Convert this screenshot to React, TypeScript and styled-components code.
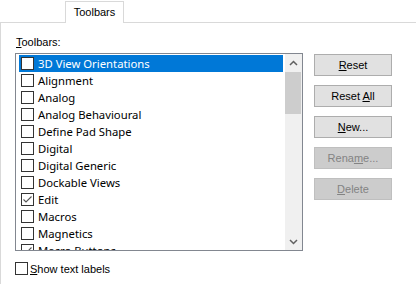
import React from "react";
import styled, { createGlobalStyle } from "styled-components";

const Global = createGlobalStyle`
  html, body { margin: 0; padding: 0; background: #ffffff; }
  body { width: 416px; height: 284px; overflow: hidden; font-family: "Liberation Sans", Arial, sans-serif; }
`;

const Page = styled.div`
  width: 416px;
  height: 284px;
  display: flex;
  flex-direction: column;
  background: #ffffff;
`;

const TabStrip = styled.div`
  height: 22px;
  display: flex;
  align-items: flex-end;
  padding-left: 65px;
  box-sizing: border-box;
`;

const Tab = styled.div`
  width: 59px;
  height: 22px;
  box-sizing: border-box;
  border: 1px solid #d9d9d9;
  border-bottom: none;
  background: #ffffff;
  margin-bottom: -1px;
  position: relative;
  z-index: 1;
  font-size: 11px;
  color: #000;
  display: flex;
  justify-content: center;
  padding-top: 4px;
`;

const Panel = styled.div`
  flex: 1;
  border-top: 1px solid #d9d9d9;
  border-left: 1px solid #d9d9d9;
  padding: 13px 0 0 14px;
  display: flex;
  flex-direction: column;
`;

const Label = styled.div`
  font-size: 11px;
  line-height: 13px;
  color: #000;
  margin-left: 1px;
  height: 17px;
`;

const Mn = styled.span`
  text-decoration: underline;
  text-underline-offset: 1px;
`;

const Row = styled.div`
  display: flex;
  gap: 11px;
`;

const ListBox = styled.div`
  width: 288px;
  height: 198px;
  box-sizing: border-box;
  border: 1px solid #828790;
  display: flex;
  overflow: hidden;
  background: #fff;
`;

const Items = styled.div`
  flex: 1;
  padding: 1px 2px 0 3px;
  overflow: hidden;
`;

const Item = styled.div<{ $sel?: boolean }>`
  height: 17px;
  display: flex;
  align-items: center;
  background: ${(p) => (p.$sel ? "#0078d7" : "transparent")};
  color: ${(p) => (p.$sel ? "#ffffff" : "#000000")};
  font-family: "Noto Sans", "Open Sans", sans-serif;
  font-size: 11.3px;
  white-space: nowrap;
  padding-left: 2px;
`;

const Box = styled.span<{ $gap?: number }>`
  width: 13px;
  height: 13px;
  box-sizing: border-box;
  border: 1px solid #333333;
  background: #ffffff;
  margin-right: ${(p) => p.$gap ?? 4}px;
  flex: none;
  display: flex;
  align-items: center;
  justify-content: center;
`;

const ScrollBar = styled.div`
  width: 17px;
  background: #f0f0f0;
  display: flex;
  flex-direction: column;
`;

const Arrow = styled.div`
  height: 17px;
  display: flex;
  align-items: center;
  justify-content: center;
`;

const Thumb = styled.div`
  margin: 1px 1px 0 0;
  height: 42px;
  background: #cdcdcd;
`;

const Track = styled.div`
  flex: 1;
`;

const Buttons = styled.div`
  display: flex;
  flex-direction: column;
  gap: 9px;
  padding-top: 1px;
`;

const Button = styled.div<{ $disabled?: boolean }>`
  width: 78px;
  height: 22px;
  box-sizing: border-box;
  border: 1px solid ${(p) => (p.$disabled ? "#bfbfbf" : "#adadad")};
  background: ${(p) => (p.$disabled ? "#cccccc" : "#e1e1e1")};
  color: ${(p) => (p.$disabled ? "#838383" : "#000000")};
  font-size: 11px;
  display: flex;
  align-items: center;
  justify-content: center;
  white-space: pre;
`;

const Footer = styled.label`
  display: flex;
  align-items: center;
  margin-top: 11px;
  font-size: 11px;
  color: #000;
`;

const Check = () => (
  <svg width="11" height="11" viewBox="0 0 11 11">
    <path d="M1.5 5.5 L4 8 L9.5 2.5" fill="none" stroke="#555" strokeWidth="1.1" />
  </svg>
);

const items: { name: string; checked?: boolean; sel?: boolean }[] = [
  { name: "3D View Orientations", sel: true },
  { name: "Alignment" },
  { name: "Analog" },
  { name: "Analog Behavioural" },
  { name: "Define Pad Shape" },
  { name: "Digital" },
  { name: "Digital Generic" },
  { name: "Dockable Views" },
  { name: "Edit", checked: true },
  { name: "Macros" },
  { name: "Magnetics" },
  { name: "Macro Buttons", checked: true },
];

export default function App() {
  return (
    <Page>
      <Global />
      <TabStrip>
        <Tab>Toolbars</Tab>
      </TabStrip>
      <Panel>
        <Label>
          <Mn>T</Mn>oolbars:
        </Label>
        <Row>
          <ListBox>
            <Items>
              {items.map((it) => (
                <Item key={it.name} $sel={it.sel}>
                  <Box>{it.checked && <Check />}</Box>
                  {it.name}
                </Item>
              ))}
            </Items>
            <ScrollBar>
              <Arrow>
                <svg width="9" height="6" viewBox="0 0 9 6">
                  <path d="M1 5 L4.5 1.5 L8 5" fill="none" stroke="#606060" strokeWidth="1.5" />
                </svg>
              </Arrow>
              <Thumb />
              <Track />
              <Arrow>
                <svg width="9" height="6" viewBox="0 0 9 6">
                  <path d="M1 1 L4.5 4.5 L8 1" fill="none" stroke="#606060" strokeWidth="1.5" />
                </svg>
              </Arrow>
            </ScrollBar>
          </ListBox>
          <Buttons>
            <Button>
              <span>
                <Mn>R</Mn>eset
              </span>
            </Button>
            <Button>
              <span>
                Reset <Mn>A</Mn>ll
              </span>
            </Button>
            <Button>
              <span>
                <Mn>N</Mn>ew...
              </span>
            </Button>
            <Button $disabled>
              <span>
                Rena<Mn>m</Mn>e...
              </span>
            </Button>
            <Button $disabled>
              <span>
                <Mn>D</Mn>elete
              </span>
            </Button>
          </Buttons>
        </Row>
        <Footer>
          <Box $gap={2} />
          <span>
            <Mn>S</Mn>how text labels
          </span>
        </Footer>
      </Panel>
    </Page>
  );
}
